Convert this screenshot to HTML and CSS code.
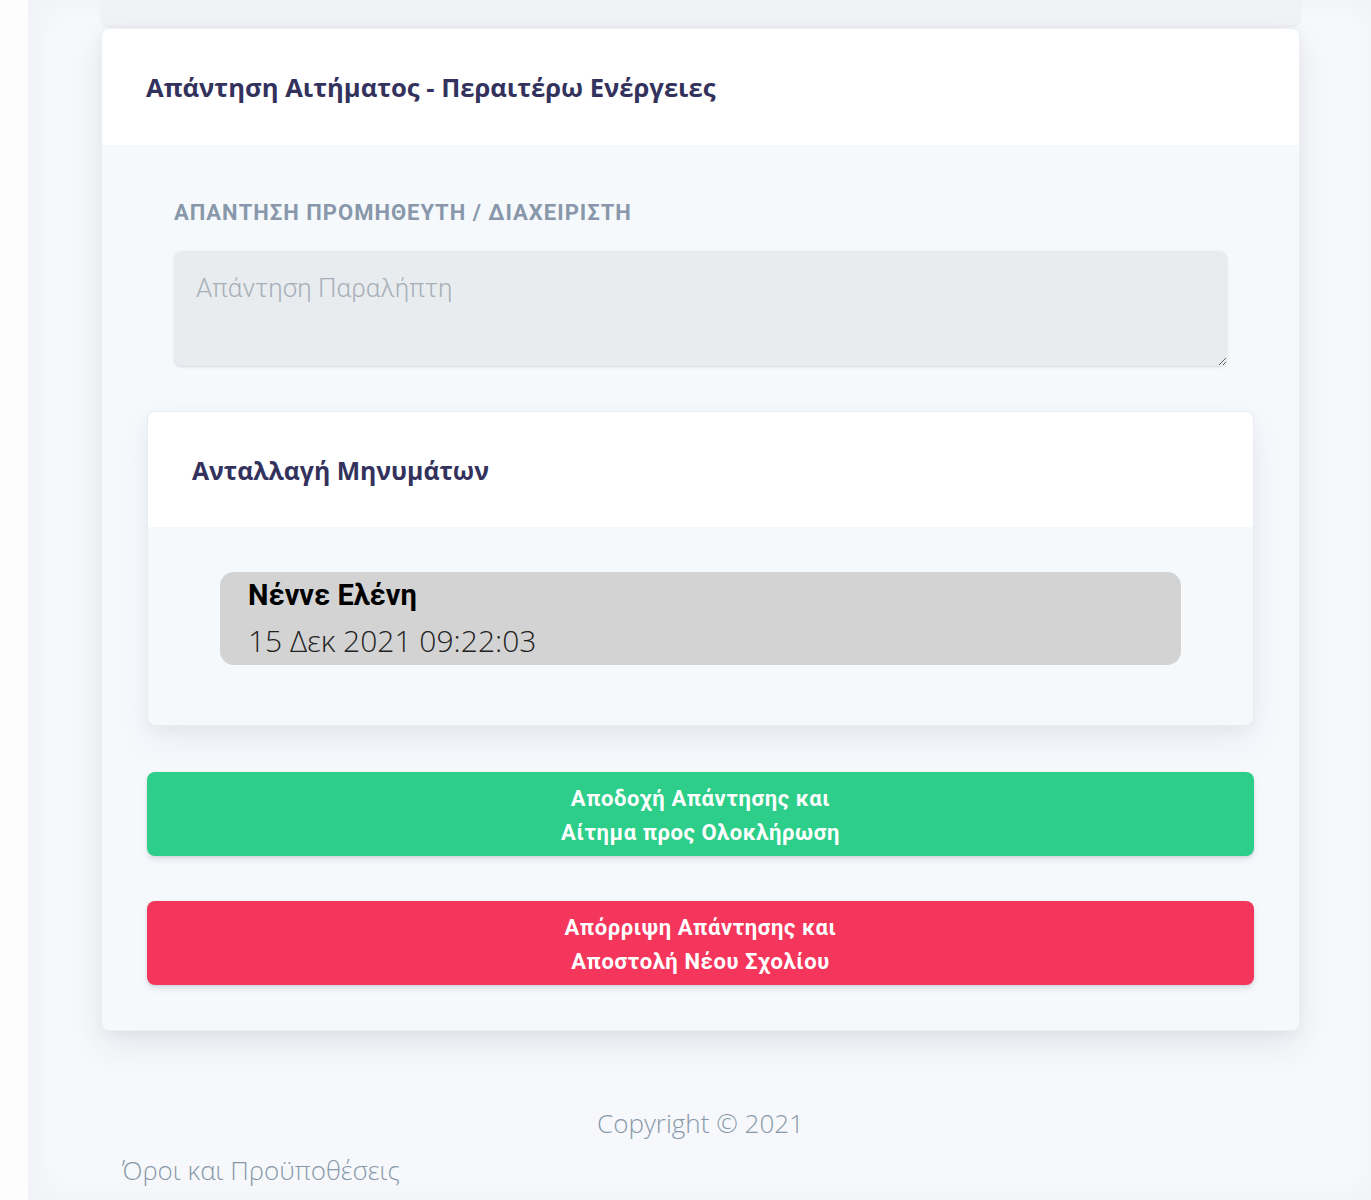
FILE: index.html
```html
<!DOCTYPE html>
<html lang="el">
<head>
<meta charset="utf-8">
<title>Απάντηση Αιτήματος</title>
<link rel="stylesheet" href="styles.css">
</head>
<body>
<div class="layout">
  <aside class="sidebar"></aside>
  <main class="main">
    <div class="content">
      <div class="prev-card"></div>
      <section class="card">
        <header class="card-header">
          <h3 class="card-title">Απάντηση Αιτήματος - Περαιτέρω Ενέργειες</h3>
        </header>
        <div class="card-body">
          <div class="form-group">
            <label class="form-label">Απάντηση Προμηθευτή / Διαχειριστή</label>
            <textarea class="form-control" placeholder="Απάντηση Παραλήπτη" disabled></textarea>
          </div>
          <section class="card inner-card">
            <header class="card-header inner-header">
              <h3 class="card-title inner-title">Ανταλλαγή Μηνυμάτων</h3>
            </header>
            <div class="inner-body">
              <div class="bubble">
                <div class="bubble-name">Νέννε Ελένη</div>
                <div class="bubble-date">15 Δεκ 2021 09:22:03</div>
              </div>
            </div>
          </section>
          <button class="btn btn-success">Αποδοχή Απάντησης και<br>Αίτημα προς Ολοκλήρωση</button>
          <button class="btn btn-danger">Απόρριψη Απάντησης και<br>Αποστολή Νέου Σχολίου</button>
        </div>
      </section>
      <footer class="footer">
        <div class="copyright">Copyright © 2021</div>
        <a class="terms" href="#">Όροι και Προϋποθέσεις</a>
      </footer>
    </div>
  </main>
</div>
</body>
</html>
```

FILE: styles.css
```css
* { box-sizing: border-box; }
html, body { margin: 0; padding: 0; }
body {
  font-family: "Open Sans", "Noto Sans", sans-serif;
  background: #ffffff;
  height: 1200px;
  overflow: hidden;
}
.layout { display: flex; min-height: 1200px; }
.sidebar {
  width: 28px;
  flex: 0 0 28px;
  background: #fdfdfe;
}
.main {
  flex: 1;
  background: #f6f8fb;
  box-shadow: inset 6px 0 30px rgba(50, 50, 93, 0.04);
  padding: 0 71px 0 73px;
}
.content { display: flex; flex-direction: column; }
.prev-card {
  height: 26px;
  background: #f0f2f6;
  border-radius: 0 0 8px 8px;
  box-shadow: 0 1px 2px rgba(0, 0, 0, 0.08);
}
.card {
  margin-top: 2px;
  background: #f6f9fc;
  border-radius: 8px;
  border: 1px solid rgba(0, 0, 0, 0.04);
  box-shadow: 0 15px 35px rgba(50, 50, 93, 0.08), 0 5px 15px rgba(0, 0, 0, 0.04);
  overflow: hidden;
}
.card-header {
  background: #ffffff;
  height: 116px;
  padding: 0 44px;
  display: flex;
  align-items: center;
}
.card-title {
  margin: 0;
  font-family: "Open Sans", sans-serif;
  font-weight: 700;
  font-size: 25.6px;
  color: #32325d;
  padding-top: 1px;
}
.card-body { padding: 45px 45px 45px; display: flex; flex-direction: column; }
.form-group { padding: 10px 27px 0; margin-bottom: 45px; display: flex; flex-direction: column; }
.form-label {
  font-family: Roboto, sans-serif;
  font-weight: 700;
  font-size: 22px;
  line-height: 26px;
  letter-spacing: 1px;
  text-transform: uppercase;
  color: #8898aa;
  margin-bottom: 25px;
}
.form-control {
  height: 115px;
  width: 100%;
  resize: vertical;
  border: 0;
  border-radius: 8px;
  background: #e9ecef;
  padding: 22px 22px;
  font-family: Roboto, sans-serif;
  font-size: 26px;
  font-weight: 300;
  color: #8898aa;
  box-shadow: 0 1px 3px rgba(50, 50, 93, 0.15), 0 1px 0 rgba(0, 0, 0, 0.02);
}
.form-control::placeholder { color: #a7b0b9; }
.inner-card {
  margin-top: 0;
  margin-bottom: 46px;
  border: 1px solid rgba(0, 0, 0, 0.05);
  box-shadow: 0 15px 35px rgba(50, 50, 93, 0.07), 0 5px 15px rgba(0, 0, 0, 0.03);
}
.inner-header { height: 115px; padding: 0 44px; }
.inner-title { font-size: 24.8px; }
.inner-body { padding: 45px 72px 60px; }
.bubble {
  background: #d3d3d3;
  border-radius: 14px;
  padding: 5px 28px 1px;
}
.bubble-name {
  font-family: Roboto, sans-serif;
  font-weight: 700;
  font-size: 29px;
  line-height: 36px;
  color: #000000;
}
.bubble-date {
  font-family: "Open Sans", sans-serif;
  font-weight: 300;
  font-size: 30px;
  line-height: 46px;
  margin-top: 5px;
  color: #222222;
}
.btn {
  display: block;
  width: 100%;
  height: 84px;
  border: 0;
  border-radius: 8px;
  padding: 4px 0 0;
  font-family: Roboto, sans-serif;
  font-weight: 700;
  font-size: 22px;
  line-height: 34px;
  letter-spacing: 0.6px;
  color: #ffffff;
  box-shadow: 0 4px 6px rgba(50, 50, 93, 0.11), 0 1px 3px rgba(0, 0, 0, 0.08);
  cursor: pointer;
}
.btn-success { background: #2dce89; margin-bottom: 45px; }
.btn-danger { background: #f5365c; }
.footer {
  display: flex;
  flex-direction: column;
  padding: 71px 0 0 0;
}
.copyright {
  text-align: center;
  font-family: "Open Sans", sans-serif;
  font-weight: 300;
  font-size: 26px;
  line-height: 42px;
  color: #8898aa;
}
.terms {
  font-family: "Open Sans", sans-serif;
  font-weight: 300;
  font-size: 26px;
  line-height: 42px;
  color: #8898aa;
  text-decoration: none;
  margin: 5px 0 0 21px;
}
```
